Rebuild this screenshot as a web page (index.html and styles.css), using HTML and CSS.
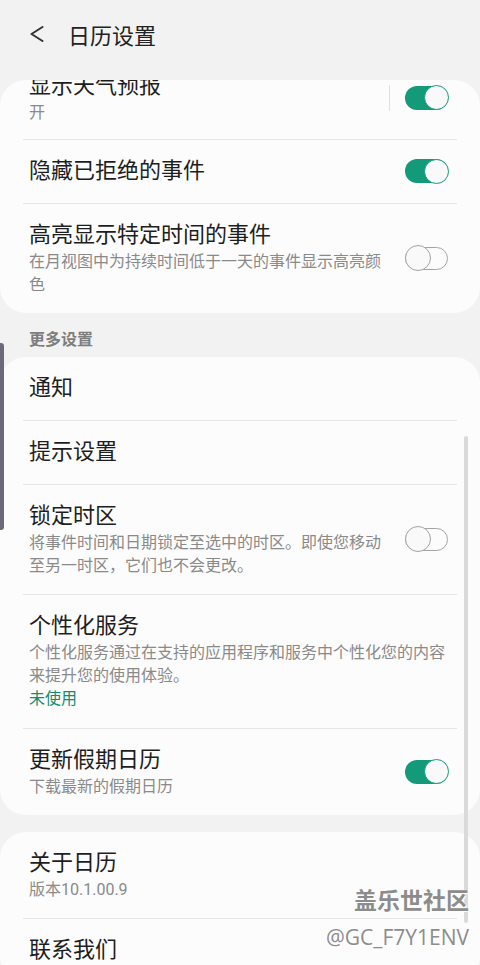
FILE: index.html
```html
<!DOCTYPE html>
<html lang="zh-CN">
<head>
<meta charset="UTF-8">
<meta name="viewport" content="width=device-width, initial-scale=1.0">
<title>日历设置</title>
<link rel="stylesheet" href="styles.css">
</head>
<body>

<!-- 顶部栏 -->
<header class="topbar">
  <svg class="back" width="14" height="16" viewBox="0 0 14 16">
    <path d="M12.5 1 L1.5 8 L12.5 15" fill="none" stroke="#333" stroke-width="2" stroke-linecap="round" stroke-linejoin="round"/>
  </svg>
  <h1 class="page-title">日历设置</h1>
</header>

<!-- 常规设置（已滚动） -->
<section class="card">
  <div class="row first">
    <div class="text">
      <div class="title">显示天气预报</div>
      <div class="sub">开</div>
    </div>
    <span class="divider"></span>
    <span class="switch on"></span>
  </div>
  <div class="row">
    <div class="text">
      <div class="title">隐藏已拒绝的事件</div>
    </div>
    <span class="switch on"></span>
  </div>
  <div class="row">
    <div class="text">
      <div class="title">高亮显示特定时间的事件</div>
      <div class="sub">在月视图中为持续时间低于一天的事件显示高亮颜色</div>
    </div>
    <span class="switch off"></span>
  </div>
</section>

<div class="section-label">更多设置</div>

<section class="card">
  <div class="row">
    <div class="text"><div class="title">通知</div></div>
  </div>
  <div class="row">
    <div class="text"><div class="title">提示设置</div></div>
  </div>
  <div class="row">
    <div class="text">
      <div class="title">锁定时区</div>
      <div class="sub">将事件时间和日期锁定至选中的时区。即使您移动至另一时区，它们也不会更改。</div>
    </div>
    <span class="switch off"></span>
  </div>
  <div class="row">
    <div class="text wide">
      <div class="title">个性化服务</div>
      <div class="sub">个性化服务通过在支持的应用程序和服务中个性化您的内容来提升您的使用体验。</div>
      <div class="status">未使用</div>
    </div>
  </div>
  <div class="row">
    <div class="text">
      <div class="title">更新假期日历</div>
      <div class="sub">下载最新的假期日历</div>
    </div>
    <span class="switch on"></span>
  </div>
</section>

<section class="card">
  <div class="row">
    <div class="text">
      <div class="title">关于日历</div>
      <div class="sub">版本10.1.00.9</div>
    </div>
  </div>
  <div class="row">
    <div class="text"><div class="title">联系我们</div></div>
  </div>
</section>

<!-- 覆盖层 -->
<div class="edge-handle"></div>
<div class="scrollbar"></div>
<div class="watermark">
  <div class="wm-name">盖乐世社区</div>
  <div class="wm-user">@GC_F7Y1ENV</div>
</div>

</body>
</html>
```

FILE: styles.css
```css
body {
  font-family: Roboto, "Noto Sans CJK SC", sans-serif;
  margin: 0;
  width: 480px;
  height: 965px;
  overflow: hidden;
  position: relative;
  background-color: #f2f2f2;
  color: #1e1e1e;
}
.topbar {
  display: flex;
  align-items: center;
  height: 68px;
  padding-left: 30px;
  margin-bottom: 12px;
}
.back {
  flex: none;
  margin-right: 24px;
}
.page-title {
  margin: 0;
  font-size: 22px;
  font-weight: normal;
  color: #222;
}
.card {
  background-color: #fcfcfc;
  border-radius: 26px;
  overflow: hidden;
  padding: 0 23px;
}
.card + .card {
  margin-top: 17px;
}
.row {
  display: flex;
  align-items: center;
  padding: 16px 9px 17px 6px;
}
.row + .row {
  border-top: 1px solid #e6e6e6;
}
.row.first {
  margin-top: -25px;
  padding-bottom: 15px;
}
.text {
  flex: 1;
  min-width: 0;
  margin-right: 18px;
}
.text.wide {
  margin-right: 0;
}
.title {
  font-size: 22px;
  line-height: 30px;
}
.sub {
  font-size: 16px;
  line-height: 23px;
  color: #8a8a8a;
}
.status {
  font-size: 16px;
  line-height: 24px;
  color: #0c8f72;
}
.divider {
  flex: none;
  width: 1px;
  height: 26px;
  background-color: #e0e0e0;
  margin-right: 15px;
}
.section-label {
  padding: 15px 29px 5px;
  font-size: 16px;
  line-height: 24px;
  font-weight: bold;
  color: #7d7d7d;
}

/* 开关 */
.switch {
  flex: none;
  position: relative;
  width: 43px;
  height: 24px;
  border-radius: 12px;
  box-sizing: border-box;
}
.switch::after {
  content: "";
  position: absolute;
  border-radius: 50%;
  box-sizing: border-box;
  background-color: #f9f9f9;
}
.switch.on {
  background-color: #139a79;
}
.switch.on::after {
  right: -1px;
  top: -0.5px;
  width: 25px;
  height: 25px;
  border: 1.5px solid #139a79;
}
.switch.off {
  border: 1.5px solid #a3a3a3;
  height: 23px;
}
.switch.off::after {
  left: -1.5px;
  top: -3px;
  width: 26px;
  height: 26px;
  border: 1.5px solid #a3a3a3;
}

/* 覆盖层 */
.edge-handle {
  position: absolute;
  left: 0;
  top: 343px;
  width: 4px;
  height: 187px;
  background-color: #6c6a78;
  border-radius: 0 3px 3px 0;
}
.scrollbar {
  position: absolute;
  left: 464px;
  top: 436px;
  width: 4px;
  height: 487px;
  background-color: #dadada;
  border-radius: 2px;
}
.watermark {
  position: absolute;
  right: 11px;
  top: 886px;
  text-align: right;
  color: #8c8c8c;
  text-shadow: 0 0 2px #fff, 1px 1px 0 #fff;
}
.wm-name {
  font-size: 23px;
  line-height: 32px;
  font-weight: bold;
}
.wm-user {
  font-family: "Open Sans", sans-serif;
  font-size: 21px;
  line-height: 30px;
  margin-top: 4px;
}
```
